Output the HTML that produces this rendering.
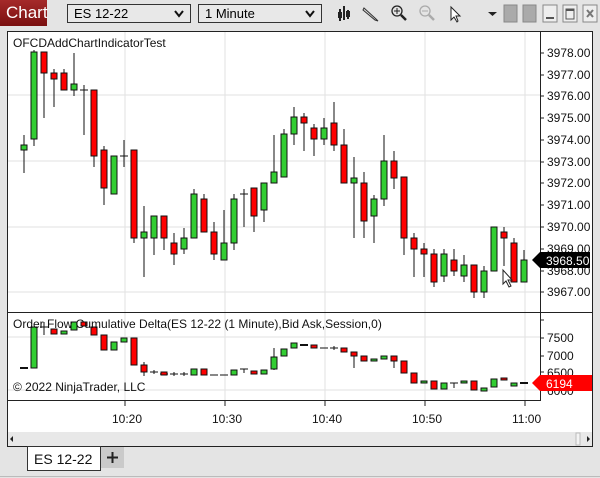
<!DOCTYPE html>
<html><head><meta charset="utf-8"><style>
*{margin:0;padding:0;box-sizing:border-box}
body{width:600px;height:478px;background:#e4e4e4;font-family:"Liberation Sans",sans-serif;position:relative;overflow:hidden}
.dd{position:absolute;top:4px;height:19px;border:1px solid #333;background:#e8e8e8;font-size:13px;padding-left:6px;line-height:17px}
.dd svg{position:absolute;right:6px;top:5px}
</style></head><body>
<div style="position:absolute;left:0;top:0;width:47px;height:26px;background:linear-gradient(#a52a2a,#7a1010);color:#fff;font-size:17px;line-height:25px;padding-left:6px">Chart</div>
<div class="dd" style="left:67px;width:124px">ES 12-22<svg width="10" height="8"><path d="M1 1 L5 6 L9 1" fill="none" stroke="#111" stroke-width="2"/></svg></div>
<div class="dd" style="left:198px;width:124px">1 Minute<svg width="10" height="8"><path d="M1 1 L5 6 L9 1" fill="none" stroke="#111" stroke-width="2"/></svg></div>
<svg style="position:absolute;left:0;top:0" width="600" height="30">
<g stroke="#222" stroke-width="2"><line x1="340" y1="9" x2="340" y2="21"/><line x1="344" y1="6" x2="344" y2="20"/><line x1="348" y1="10" x2="348" y2="19"/></g>
<rect x="338" y="12" width="4" height="6" fill="#222"/><rect x="346" y="11" width="4" height="6" fill="#222"/>
<path d="M364 8 L376 19 L378 21 L375 20 L363 10Z" fill="#ddd" stroke="#333"/>
<circle cx="397" cy="11" r="5" fill="none" stroke="#222" stroke-width="1.3"/><path d="M394 11h6M397 8v6" stroke="#222"/><line x1="401" y1="15" x2="406" y2="20" stroke="#222" stroke-width="2.5"/>
<circle cx="425" cy="11" r="5" fill="none" stroke="#aaa" stroke-width="1.3"/><path d="M422 11h6" stroke="#aaa"/><line x1="429" y1="15" x2="434" y2="20" stroke="#aaa" stroke-width="2.5"/>
<path d="M451 7 L451 20 L454 17 L457 22 L458 21 L456 16 L460 16Z" fill="#fff" stroke="#222"/>
<path d="M488 12 L497 12 L492.5 16Z" fill="#222"/>
<rect x="504" y="5" width="13" height="17" fill="#aaa" stroke="#888"/><rect x="523" y="5" width="13" height="17" fill="#aaa" stroke="#888"/>
<rect x="543" y="5" width="14" height="17" fill="#eee" stroke="#888"/><line x1="546" y1="18" x2="554" y2="18" stroke="#555" stroke-width="2"/>
<rect x="563" y="5" width="14" height="17" fill="#eee" stroke="#888"/><rect x="566" y="9" width="8" height="10" fill="none" stroke="#555"/><line x1="566" y1="10" x2="574" y2="10" stroke="#555" stroke-width="2"/>
<rect x="583" y="5" width="14" height="17" fill="#eee" stroke="#888"/><path d="M587 10l6 7M593 10l-6 7" stroke="#777" stroke-width="2"/>
</svg>
<svg style="position:absolute;left:0;top:0" width="600" height="478" font-family="Liberation Sans, sans-serif">
<rect x="7.5" y="31.5" width="585" height="415" fill="#fff" stroke="#222"/>
<g stroke="#e2e2e2"><line x1="125" y1="32" x2="125" y2="400"/><line x1="225" y1="32" x2="225" y2="400"/><line x1="325" y1="32" x2="325" y2="400"/><line x1="425" y1="32" x2="425" y2="400"/><line x1="525" y1="32" x2="525" y2="400"/>
<line x1="8" y1="95" x2="540" y2="95"/><line x1="8" y1="161" x2="540" y2="161"/><line x1="8" y1="227" x2="540" y2="227"/><line x1="8" y1="292" x2="540" y2="292"/><line x1="8" y1="337" x2="540" y2="337"/><line x1="8" y1="390" x2="540" y2="390"/></g>
<line x1="8" y1="312.5" x2="592" y2="312.5" stroke="#222"/>
<line x1="8" y1="400.5" x2="540" y2="400.5" stroke="#222"/>
<line x1="540.5" y1="32" x2="540.5" y2="401" stroke="#222"/>
<g stroke="#222"><path d="M540 53h4M540 75h4M540 96h4M540 118h4M540 140h4M540 162h4M540 183h4M540 205h4M540 227h4M540 249h4M540 271h4M540 292h4M540 338h4M540 356h4M540 372h4M540 390h4M540 320h4"/>
<path d="M125 401v5M225 401v5M325 401v5M425 401v5M525 401v5"/></g>
<g font-size="12" fill="#111">
<text x="547" y="57">3978.00</text><text x="547" y="79">3977.00</text><text x="547" y="100">3976.00</text><text x="547" y="122">3975.00</text><text x="547" y="144">3974.00</text><text x="547" y="166">3973.00</text><text x="547" y="187">3972.00</text><text x="547" y="209">3971.00</text><text x="547" y="231">3970.00</text><text x="547" y="253">3969.00</text><text x="547" y="275">3968.00</text><text x="547" y="296">3967.00</text>
<text x="547" y="342">7500</text><text x="547" y="360">7000</text><text x="547" y="377">6500</text><text x="547" y="395">6000</text>
<text x="112" y="423">10:20</text><text x="212" y="423">10:30</text><text x="312" y="423">10:40</text><text x="412" y="423">10:50</text><text x="512" y="423">11:00</text>
<text x="13" y="47">OFCDAddChartIndicatorTest</text>
</g>
<g stroke="#111" stroke-width="1">
<line x1="24" y1="135" x2="24" y2="173"/><rect x="21" y="145" width="6" height="5" fill="#32cd32"/>
<line x1="34" y1="50" x2="34" y2="146"/><rect x="31" y="52" width="6" height="87" fill="#32cd32"/>
<line x1="44" y1="52" x2="44" y2="118"/><rect x="41" y="52" width="6" height="21" fill="#f00"/>
<line x1="54" y1="69" x2="54" y2="107"/><rect x="51" y="73" width="6" height="6" fill="#f00"/>
<line x1="64" y1="69" x2="64" y2="90"/><rect x="61" y="73" width="6" height="17" fill="#f00"/>
<line x1="74" y1="53" x2="74" y2="96"/><rect x="71" y="84" width="6" height="6" fill="#32cd32"/>
<line x1="84" y1="85" x2="84" y2="135"/><line x1="80" y1="90" x2="88" y2="90"/>
<line x1="94" y1="90" x2="94" y2="167"/><rect x="91" y="90" width="6" height="66" fill="#f00"/>
<line x1="104" y1="146" x2="104" y2="205"/><rect x="101" y="150" width="6" height="38" fill="#f00"/>
<rect x="111" y="156" width="6" height="38" fill="#32cd32"/>
<line x1="124" y1="140" x2="124" y2="167"/><line x1="120" y1="156" x2="128" y2="156"/>
<line x1="134" y1="150" x2="134" y2="243"/><rect x="131" y="150" width="6" height="88" fill="#f00"/>
<line x1="144" y1="206" x2="144" y2="277"/><rect x="141" y="232" width="6" height="6" fill="#32cd32"/>
<line x1="154" y1="216" x2="154" y2="255"/><rect x="151" y="216" width="6" height="22" fill="#32cd32"/>
<line x1="164" y1="216" x2="164" y2="250"/><rect x="161" y="216" width="6" height="22" fill="#f00"/>
<line x1="174" y1="233" x2="174" y2="265"/><rect x="171" y="243" width="6" height="11" fill="#f00"/>
<line x1="184" y1="228" x2="184" y2="254"/><rect x="181" y="238" width="6" height="11" fill="#32cd32"/>
<line x1="194" y1="189" x2="194" y2="238"/><rect x="191" y="194" width="6" height="44" fill="#32cd32"/>
<line x1="204" y1="194" x2="204" y2="232"/><rect x="201" y="199" width="6" height="33" fill="#f00"/>
<line x1="214" y1="222" x2="214" y2="260"/><rect x="211" y="232" width="6" height="22" fill="#f00"/>
<line x1="224" y1="210" x2="224" y2="260"/><rect x="221" y="243" width="6" height="17" fill="#32cd32"/>
<line x1="234" y1="194" x2="234" y2="250"/><rect x="231" y="199" width="6" height="44" fill="#32cd32"/>
<line x1="244" y1="189" x2="244" y2="227"/><line x1="240" y1="194" x2="248" y2="194"/>
<line x1="254" y1="188" x2="254" y2="232"/><rect x="251" y="188" width="6" height="28" fill="#f00"/>
<line x1="264" y1="183" x2="264" y2="222"/><rect x="261" y="183" width="6" height="27" fill="#32cd32"/>
<line x1="274" y1="135" x2="274" y2="183"/><rect x="271" y="172" width="6" height="11" fill="#32cd32"/>
<line x1="284" y1="129" x2="284" y2="177"/><rect x="281" y="134" width="6" height="43" fill="#32cd32"/>
<line x1="294" y1="107" x2="294" y2="145"/><rect x="291" y="117" width="6" height="17" fill="#32cd32"/>
<line x1="304" y1="113" x2="304" y2="151"/><rect x="301" y="117" width="6" height="6" fill="#f00"/>
<line x1="314" y1="124" x2="314" y2="156"/><rect x="311" y="128" width="6" height="11" fill="#f00"/>
<line x1="324" y1="118" x2="324" y2="145"/><rect x="321" y="128" width="6" height="11" fill="#32cd32"/>
<line x1="334" y1="102" x2="334" y2="151"/><rect x="331" y="123" width="6" height="22" fill="#f00"/>
<line x1="344" y1="129" x2="344" y2="183"/><rect x="341" y="145" width="6" height="38" fill="#f00"/>
<line x1="354" y1="157" x2="354" y2="238"/><rect x="351" y="178" width="6" height="5" fill="#32cd32"/>
<line x1="364" y1="172" x2="364" y2="238"/><rect x="361" y="183" width="6" height="38" fill="#f00"/>
<line x1="374" y1="195" x2="374" y2="243"/><rect x="371" y="199" width="6" height="17" fill="#32cd32"/>
<line x1="384" y1="135" x2="384" y2="206"/><rect x="381" y="161" width="6" height="38" fill="#32cd32"/>
<line x1="394" y1="151" x2="394" y2="189"/><rect x="391" y="161" width="6" height="17" fill="#f00"/>
<line x1="404" y1="177" x2="404" y2="255"/><rect x="401" y="177" width="6" height="61" fill="#f00"/>
<line x1="414" y1="233" x2="414" y2="277"/><rect x="411" y="238" width="6" height="11" fill="#f00"/>
<line x1="424" y1="243" x2="424" y2="277"/><rect x="421" y="249" width="6" height="5" fill="#f00"/>
<line x1="434" y1="249" x2="434" y2="287"/><rect x="431" y="254" width="6" height="28" fill="#f00"/>
<line x1="444" y1="249" x2="444" y2="282"/><rect x="441" y="254" width="6" height="22" fill="#32cd32"/>
<line x1="454" y1="249" x2="454" y2="276"/><rect x="451" y="260" width="6" height="11" fill="#f00"/>
<line x1="464" y1="255" x2="464" y2="282"/><rect x="461" y="265" width="6" height="11" fill="#32cd32"/>
<line x1="474" y1="265" x2="474" y2="298"/><rect x="471" y="265" width="6" height="27" fill="#f00"/>
<line x1="484" y1="266" x2="484" y2="298"/><rect x="481" y="271" width="6" height="21" fill="#32cd32"/>
<rect x="491" y="227" width="6" height="44" fill="#32cd32"/>
<line x1="504" y1="227" x2="504" y2="266"/><rect x="501" y="232" width="6" height="6" fill="#f00"/>
<line x1="514" y1="238" x2="514" y2="282"/><rect x="511" y="243" width="6" height="39" fill="#f00"/>
<line x1="524" y1="250" x2="524" y2="282"/><rect x="521" y="260" width="6" height="22" fill="#32cd32"/>
<line x1="20" y1="368" x2="28" y2="368" stroke-width="2"/>
<rect x="31" y="327" width="6" height="41" fill="#32cd32"/>
<line x1="44" y1="322" x2="44" y2="335"/><line x1="40" y1="327" x2="48" y2="327"/>
<rect x="51" y="329" width="6" height="5" fill="#f00"/><rect x="61" y="331" width="6" height="3" fill="#32cd32"/>
<rect x="71" y="322" width="6" height="8" fill="#32cd32"/><rect x="81" y="322" width="6" height="4" fill="#f00"/>
<rect x="91" y="327" width="6" height="8" fill="#f00"/><rect x="101" y="335" width="6" height="15" fill="#f00"/>
<rect x="111" y="342" width="6" height="8" fill="#32cd32"/><rect x="121" y="338" width="6" height="4" fill="#32cd32"/>
<rect x="131" y="338" width="6" height="27" fill="#f00"/><line x1="144" y1="362" x2="144" y2="376"/><rect x="141" y="365" width="6" height="7" fill="#f00"/>
<path d="M150 372h8M154 370v4M160 374h8M170 374h8M174 372v4M180 374h8M184 372v4M210 375h8M220 375h8M240 369h8M244 369v4"/>
<rect x="161" y="372" width="6" height="3" fill="#f00"/><rect x="191" y="369" width="6" height="6" fill="#32cd32"/><rect x="201" y="369" width="6" height="6" fill="#f00"/>
<rect x="231" y="370" width="6" height="5" fill="#32cd32"/><rect x="251" y="371" width="6" height="3" fill="#f00"/><rect x="261" y="370" width="6" height="4" fill="#32cd32"/>
<line x1="274" y1="348" x2="274" y2="370"/><rect x="271" y="357" width="6" height="12" fill="#32cd32"/><rect x="281" y="349" width="6" height="7" fill="#32cd32"/>
<rect x="291" y="343" width="6" height="5" fill="#32cd32"/><line x1="300" y1="345" x2="308" y2="345" stroke-width="2"/>
<rect x="311" y="345" width="6" height="3" fill="#f00"/><path d="M320 348h8M330 348h8M334 346v4"/>
<rect x="341" y="348" width="6" height="4" fill="#f00"/><line x1="354" y1="352" x2="354" y2="368"/><rect x="351" y="352" width="6" height="4" fill="#f00"/>
<rect x="361" y="356" width="6" height="5" fill="#f00"/><rect x="371" y="359" width="6" height="2" fill="#32cd32"/><rect x="381" y="356" width="6" height="3" fill="#32cd32"/>
<line x1="394" y1="356" x2="394" y2="368"/><rect x="391" y="356" width="6" height="5" fill="#f00"/><rect x="401" y="361" width="6" height="12" fill="#f00"/>
<rect x="411" y="373" width="6" height="10" fill="#f00"/><rect x="421" y="381" width="6" height="2" fill="#32cd32"/><rect x="431" y="381" width="6" height="8" fill="#f00"/>
<rect x="441" y="383" width="6" height="6" fill="#32cd32"/><path d="M450 383h8M454 383v5"/><rect x="461" y="381" width="6" height="2" fill="#32cd32"/>
<rect x="471" y="381" width="6" height="9" fill="#f00"/><rect x="481" y="388" width="6" height="3" fill="#32cd32"/><rect x="491" y="379" width="6" height="8" fill="#32cd32"/>
<rect x="501" y="378" width="6" height="2" fill="#f00"/><rect x="511" y="383" width="6" height="3" fill="#32cd32"/><line x1="520" y1="383" x2="528" y2="383" stroke-width="2"/>
</g>
<path d="M503 270 L503 284 L506 281 L509 287 L511 286 L508 280 L512 280Z" fill="#fff" stroke="#222"/>
<path d="M532 260 L540 252 L590 252 L590 268 L540 268Z" fill="#000"/>
<text x="546" y="265" font-size="12" fill="#fff">3968.50</text>
<path d="M532 383 L540 375 L592 375 L592 391 L540 391Z" fill="#f00"/>
<text x="546" y="388" font-size="12" fill="#fff">6194</text>
<text x="13" y="328" font-size="12" fill="#111">Order Flow Cumulative Delta(ES 12-22 (1 Minute),Bid Ask,Session,0)</text>
<text x="13" y="391" font-size="12" fill="#111">© 2022 NinjaTrader, LLC</text>
<rect x="8" y="432" width="584" height="14" fill="#e8e8e8"/>
<path d="M13 436 L13 442 L10 439Z M587 436 L587 442 L590 439Z" fill="#222"/>
<rect x="576" y="433" width="4" height="12" fill="#f4f4f4" stroke="#bbb"/>
<rect x="27.5" y="446.5" width="73" height="24" fill="#fff" stroke="#333"/>
<text x="34" y="464" font-size="14" fill="#111">ES 12-22</text>
<rect x="101" y="447" width="23" height="21" fill="#cacaca"/>
<path d="M107 457.5h11M112.5 452v11" stroke="#222" stroke-width="2"/>
<line x1="0" y1="476.5" x2="600" y2="476.5" stroke="#bbb"/>
</svg>
</body></html>
